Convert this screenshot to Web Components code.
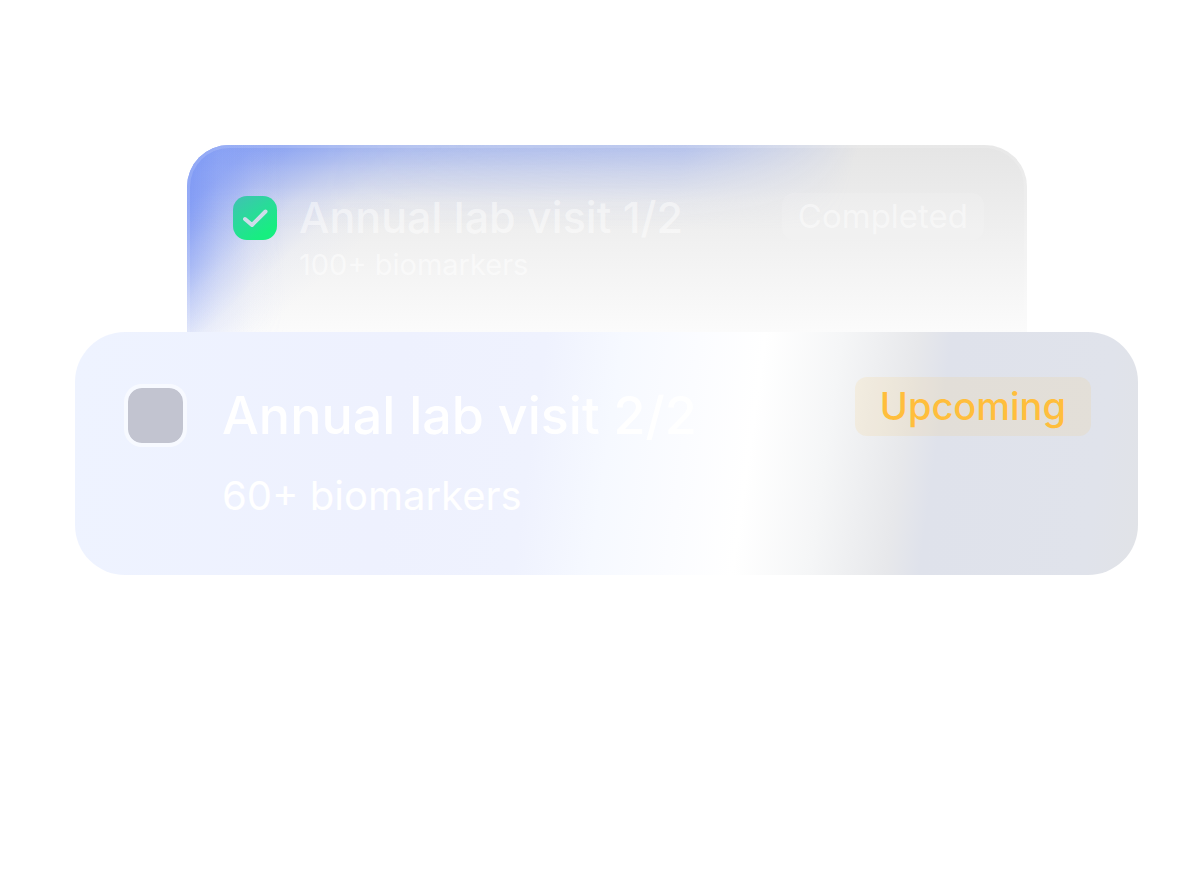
<!DOCTYPE html>
<html lang="en">
<head>
<meta charset="utf-8">
<meta name="viewport" content="width=device-width, initial-scale=1">
<title>Lab visits</title>
<style>
  body {
    margin: 0;
    background: #fff;
    font-family: Inter, "Liberation Sans", sans-serif;
  }
</style>
</head>
<body>
<visit-stack>
  <visit-card variant="back" checked>
    Annual lab visit 1/2
    <span slot="detail">100+ biomarkers</span>
    <status-badge slot="status" tone="completed">Completed</status-badge>
  </visit-card>
  <visit-card variant="front">
    Annual lab visit 2/2
    <span slot="detail">60+ biomarkers</span>
    <status-badge slot="status" tone="upcoming">Upcoming</status-badge>
  </visit-card>
</visit-stack>

<script>
/**
 * Visit Stack
 * Column that holds the visit cards, the latest one in front
 */
class VisitStack extends HTMLElement {
  constructor() {
    super();
    this.attachShadow({ mode: 'open' });
  }

  connectedCallback() {
    this.shadowRoot.innerHTML = `
      <style>
        :host {
          display: flex;
          flex-direction: column;
          padding: 145px 66px 0 75px;
        }

        ::slotted([variant="back"]) {
          margin: 0 111px 0 112px;
        }
      </style>
      <slot></slot>
    `;
  }
}

/**
 * Status Badge
 * Rounded label with the state of a visit
 */
class StatusBadge extends HTMLElement {
  constructor() {
    super();
    this.attachShadow({ mode: 'open' });
  }

  connectedCallback() {
    this.shadowRoot.innerHTML = `
      <style>
        :host {
          display: block;
          border-radius: 12px;
          font-weight: 500;
          white-space: nowrap;
        }

        :host([tone="completed"]) {
          padding: 0 16px;
          font-size: 33px;
          font-weight: 400;
          line-height: 47px;
          color: rgba(255, 255, 255, 0.45);
          background: rgba(255, 255, 255, 0.12);
        }

        :host([tone="upcoming"]) {
          padding: 0 25px;
          font-size: 38px;
          line-height: 59px;
          color: #ffbe3c;
          background: rgba(255, 190, 60, 0.11);
        }
      </style>
      <slot></slot>
    `;
  }
}

/**
 * Visit Card
 * Check box, title, detail line and status of one lab visit
 */
class VisitCard extends HTMLElement {
  constructor() {
    super();
    this.attachShadow({ mode: 'open' });
  }

  connectedCallback() {
    this.render();
  }

  render() {
    const checked = this.hasAttribute('checked') ? 'checked' : '';

    this.shadowRoot.innerHTML = `
      <style>
        :host {
          display: block;
          position: relative;
          box-sizing: border-box;
          color: #fff;
        }

        .row {
          display: flex;
          align-items: flex-start;
          position: relative;
        }

        .check {
          display: grid;
          flex: none;
        }

        .check > * {
          grid-area: 1 / 1;
        }

        input {
          appearance: none;
          box-sizing: border-box;
          margin: 0;
        }

        svg {
          display: none;
          pointer-events: none;
        }

        input:checked + svg {
          display: block;
        }

        .text {
          flex: 1;
          min-width: 0;
        }

        label {
          display: block;
          font-weight: 500;
          white-space: nowrap;
        }

        /* back card */
        :host([variant="back"]) {
          padding: 48px 43px 43px 46px;
          border-radius: 42px 42px 0 0;
          overflow: hidden;
          background:
            linear-gradient(138deg, rgba(100, 132, 245, 0.8), rgba(108, 138, 246, 0.74) 45px, rgba(128, 154, 246, 0.48) 80px, rgba(152, 172, 246, 0.24) 115px, rgba(185, 198, 248, 0.08) 150px, rgba(200, 210, 250, 0) 190px),
            linear-gradient(#e5e5e5, #efefef 45%, #fbfbfb);
        }

        /* blue glow along the top edge */
        :host([variant="back"])::before {
          content: "";
          position: absolute;
          inset: 0 auto auto 0;
          width: 80%;
          height: 84px;
          background: linear-gradient(rgba(128, 156, 244, 0.6), rgba(150, 172, 244, 0.36) 35%, rgba(185, 198, 244, 0.14) 68%, rgba(200, 210, 245, 0));
          mask-image: linear-gradient(104deg, #000 20%, rgba(0, 0, 0, 0.8) 72%, transparent 97%);
        }

        /* blue glow down the left edge */
        :host([variant="back"])::after {
          content: "";
          position: absolute;
          inset: 0 auto 0 0;
          width: 100px;
          background: linear-gradient(90deg, rgba(120, 148, 246, 0.56), rgba(150, 172, 248, 0.34) 32%, rgba(190, 202, 250, 0.12) 66%, rgba(205, 214, 252, 0));
          mask-image: linear-gradient(170deg, #000 25%, rgba(0, 0, 0, 0.75) 60%, rgba(0, 0, 0, 0.15));
        }

        .edge {
          display: none;
        }

        :host([variant="back"]) .edge {
          display: block;
          position: absolute;
          inset: 0;
          border: 3px solid rgba(255, 255, 255, 0.14);
          border-bottom: 0;
          border-radius: inherit;
          pointer-events: none;
          z-index: 1;
        }

        :host([variant="back"]) .row {
          gap: 22px;
          z-index: 1;
        }

        :host([variant="back"]) .check {
          margin-top: 3px;
        }

        :host([variant="back"]) .check > * {
          width: 44px;
          height: 44px;
        }

        :host([variant="back"]) input {
          border-radius: 14px;
          background: linear-gradient(145deg, #42c0b4, #28dc98 45%, #17ee80 80%);
        }

        :host([variant="back"]) label {
          font-size: 43px;
          line-height: 48px;
          color: rgba(255, 255, 255, 0.48);
        }

        :host([variant="back"]) .detail {
          font-size: 29px;
          line-height: 48px;
          color: rgba(255, 255, 255, 0.5);
        }

        /* front card */
        :host([variant="front"]) {
          padding: 45px 47px 38px 49px;
          border-radius: 50px;
          background: linear-gradient(98deg, #eef3ff, #eef1fe 30%, #eff2fe 43%, #f6f9ff 50%, #fbfcff 57%, #ffffff 63%, #f5f6f7 70%, #e7e8eb 77%, #dfe2eb 80%, #e0e3eb 95%, #e1e3e7);
        }

        :host([variant="front"]) .row {
          gap: 35px;
        }

        :host([variant="front"]) .check {
          margin-top: 7px;
        }

        :host([variant="front"]) .check > * {
          width: 63px;
          height: 63px;
        }

        :host([variant="front"]) input {
          border: 4px solid rgba(255, 255, 255, 0.55);
          border-radius: 18px;
          background: #c2c4d0 padding-box;
        }

        :host([variant="front"]) label {
          font-size: 52px;
          line-height: 78px;
        }

        :host([variant="front"]) .detail {
          font-size: 40px;
          line-height: 82px;
        }
      </style>

      <div class="edge"></div>
      <div class="row">
        <div class="check">
          <input type="checkbox" id="done" ${checked}>
          <svg viewBox="0 0 44 44" fill="none" stroke="#cfdcea" stroke-width="4" stroke-linecap="round" stroke-linejoin="round" aria-hidden="true">
            <path d="M12 23 L19 29 L32.5 15.5"/>
          </svg>
        </div>
        <div class="text">
          <label for="done"><slot></slot></label>
          <div class="detail"><slot name="detail"></slot></div>
        </div>
        <slot name="status"></slot>
      </div>
    `;
  }
}

customElements.define('visit-stack', VisitStack);
customElements.define('status-badge', StatusBadge);
customElements.define('visit-card', VisitCard);
</script>
</body>
</html>
